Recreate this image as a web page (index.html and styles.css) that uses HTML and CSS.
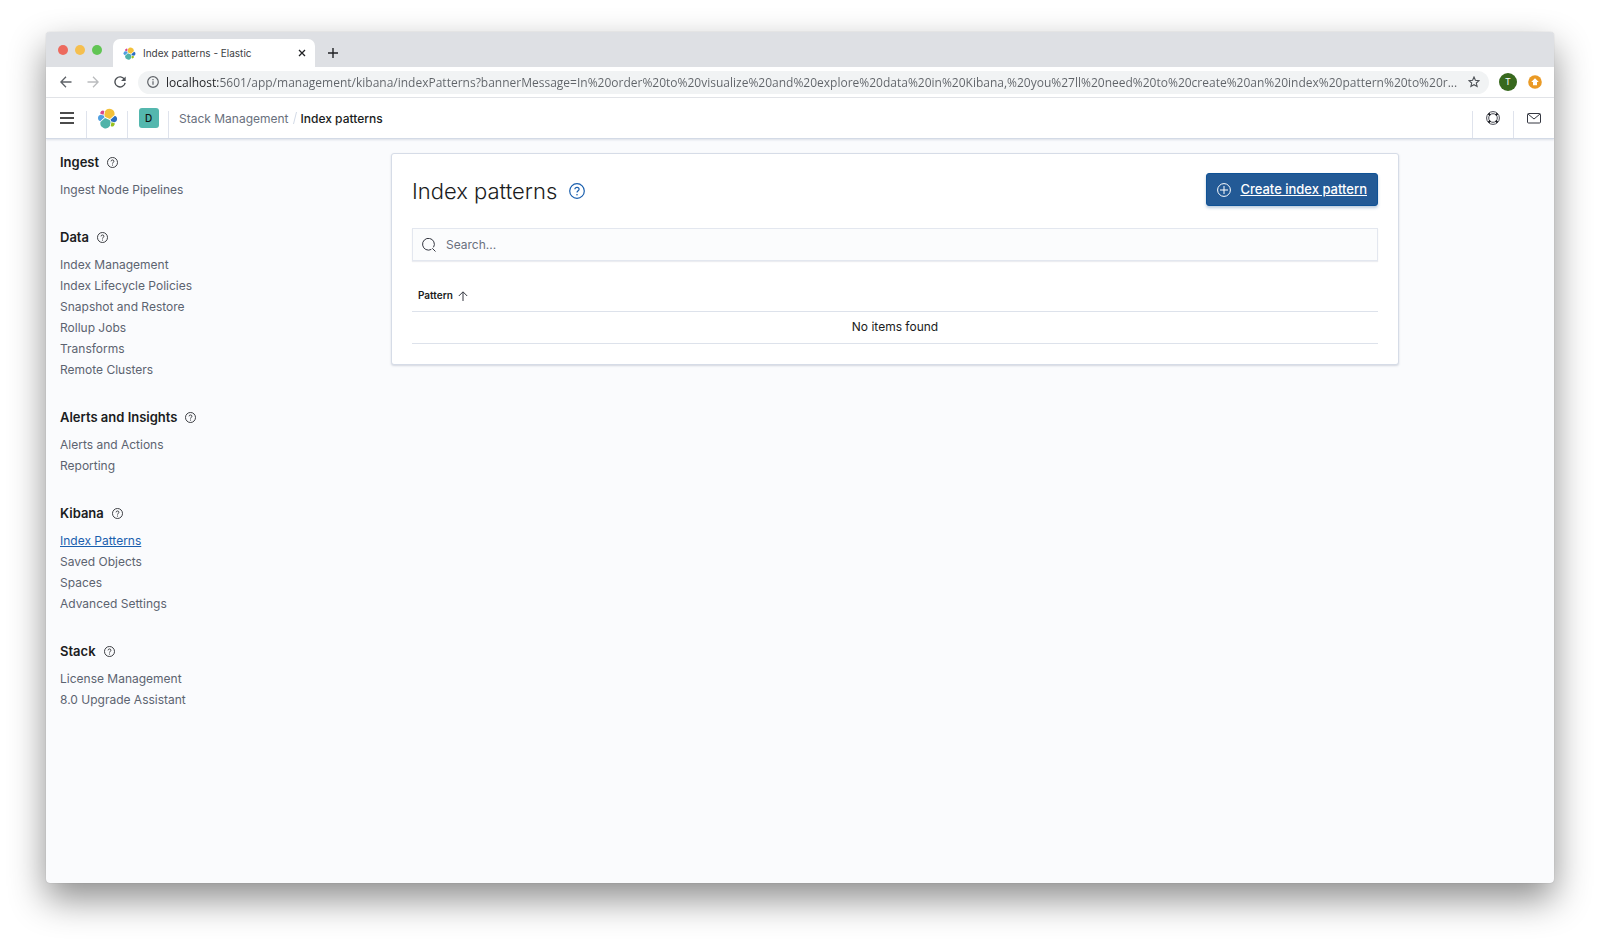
FILE: index.html
```html
<!DOCTYPE html>
<html lang="en">
<head>
<meta charset="utf-8">
<title>Index patterns - Elastic</title>
<link rel="stylesheet" href="styles.css">
</head>
<body>
<svg class="sprite" aria-hidden="true">
  <symbol id="elastic" viewBox="0 0 32 32">
    <path fill="#f3c13a" d="M12.6 13.7l7 3.2 7-6.200a7.500 7.500 0 0 0 .2-1.600 7.900 7.900 0 0 0-14.400-4.400l-1.200 6z"/>
    <path fill="#4fb3a9" d="M5.300 21.400a7.900 7.900 0 0 0 14.300 6l1.200-6-1.600-3-7-3.200z"/>
    <path fill="#d9488c" d="M5.300 9l4.800 1.200 1.100-5.500A3.800 3.800 0 0 0 5.300 9z"/>
    <path fill="#4f9fe0" d="M4.900 10.200a5.300 5.300 0 0 0-.2 9.900l6.800-6.100-1.300-2.700z"/>
    <path fill="#97c11f" d="M20.900 27.300a3.800 3.800 0 0 0 5.900-4.300l-4.800-1.200z"/>
    <path fill="#2a6dc0" d="M21.900 20.600l5.300 1.200a5.300 5.300 0 0 0 .2-9.900l-6.900 6.100z"/>
  </symbol>
  <symbol id="help" viewBox="0 0 16 16">
    <circle cx="8" cy="8" r="7.300" fill="none" stroke="currentColor" stroke-width="1.200"/>
    <path d="M5.900 6.300c0-1.200.9-2 2.100-2s2.100.8 2.100 1.900c0 1.600-2.100 1.600-2.100 3.400" fill="none" stroke="currentColor" stroke-width="1.200"/>
    <circle cx="8" cy="11.700" r=".8" fill="currentColor"/>
  </symbol>
</svg>

<div class="window">
  <div class="tabstrip">
    <div class="lights">
      <button class="light light-close" aria-label="Close window"></button>
      <button class="light light-min" aria-label="Minimize window"></button>
      <button class="light light-max" aria-label="Zoom window"></button>
    </div>
    <div class="tab">
      <svg class="favicon"><use href="#elastic"/></svg>
      <span class="tab-title">Index patterns - Elastic</span>
      <button class="plain" aria-label="Close tab"><svg width="8" height="8" viewBox="0 0 8 8"><path d="M1 1l6 6M7 1L1 7" stroke="#202124" stroke-width="1.300"/></svg></button>
    </div>
    <button class="plain new-tab" aria-label="New tab"><svg width="10" height="10" viewBox="0 0 10 10"><path d="M5 0v10M0 5h10" stroke="#202124" stroke-width="1.400"/></svg></button>
  </div>

  <div class="toolbar">
    <button class="plain nav" aria-label="Back"><svg width="12" height="12" viewBox="0 0 12 12"><path d="M11.500 6H1M6 .8L.9 6 6 11.200" fill="none" stroke="#5f6368" stroke-width="1.300"/></svg></button>
    <button class="plain nav" aria-label="Forward"><svg width="12" height="12" viewBox="0 0 12 12"><path d="M.5 6H11M6 .8L11.100 6 6 11.200" fill="none" stroke="#babcbe" stroke-width="1.300"/></svg></button>
    <button class="plain nav" aria-label="Reload"><svg width="12" height="12" viewBox="0 0 12 12"><path d="M10.500 3.400A5.100 5.100 0 1 0 11.100 6.800" fill="none" stroke="#4d5156" stroke-width="1.400"/><path d="M11.700.4v4.700H7z" fill="#4d5156"/></svg></button>
    <div class="address">
      <svg width="12" height="12" viewBox="0 0 12 12"><circle cx="6" cy="6" r="5.300" fill="none" stroke="#5f6368" stroke-width="1.200"/><path d="M6 5.200v3.600M6 3v1.300" stroke="#5f6368" stroke-width="1.200"/></svg>
      <input class="url" type="text" aria-label="Address" value="localhost:5601/app/management/kibana/indexPatterns?bannerMessage=In%20order%20to%20visualize%20and%20explore%20data%20in%20Kibana,%20you%27ll%20need%20to%20create%20an%20index%20pattern%20to%20r...">
      <button class="plain" aria-label="Bookmark"><svg width="12" height="12" viewBox="0 0 12 12"><path d="M6 1l1.400 3.300 3.600.3-2.700 2.400.8 3.500L6 8.700l-3.100 1.800.8-3.500L1 4.600l3.600-.3z" fill="none" stroke="#4d5156" stroke-width="1.100"/></svg></button>
    </div>
    <button class="profile" aria-label="Profile">T</button>
    <button class="plain update" aria-label="Update"><svg width="14" height="14" viewBox="0 0 14 14"><circle cx="7" cy="7" r="6.800" fill="#ea9a25"/><path d="M7 3.200L10.800 7H9v3.200H5V7H3.200z" fill="#fff"/></svg></button>
  </div>

  <header class="header">
    <button class="cell" aria-label="Menu"><svg width="14" height="12" viewBox="0 0 14 12"><path d="M0 1h14M0 6h14M0 11h14" stroke="#111" stroke-width="1.500"/></svg></button>
    <a class="cell" href="#" aria-label="Elastic"><svg class="logo"><use href="#elastic"/></svg></a>
    <button class="cell" aria-label="Space D"><span class="space">D</span></button>
    <nav class="crumbs" aria-label="Breadcrumb">
      <a href="#">Stack Management</a><span class="slash"><svg width="4" height="12" viewBox="0 0 4 12"><path d="M3.500 0L.5 12" stroke="#d3dae6"/></svg></span><strong>Index patterns</strong>
    </nav>
    <button class="cell cell-right" aria-label="Help"><svg width="14" height="14" viewBox="0 0 14 14"><g fill="none" stroke="#343741" stroke-width=".9"><circle cx="7" cy="7" r="6.400"/><circle cx="7" cy="7" r="4.300"/></g><path d="M2.500 2.500l1.700 1.700M11.500 2.500L9.800 4.200M2.500 11.500l1.700-1.700M11.500 11.500L9.800 9.800" stroke="#1a1c21" stroke-width="2"/></svg></button>
    <button class="cell cell-right" aria-label="News"><svg width="14" height="12" viewBox="0 0 14 12"><rect x=".5" y="1.500" width="13" height="9.500" rx="1" fill="none" stroke="#343741"/><path d="M1 2l6 5 6-5" fill="none" stroke="#343741"/></svg></button>
  </header>

  <div class="page">
    <nav class="sidebar" aria-label="Management">
      <section>
        <h2>Ingest <svg><use href="#help"/></svg></h2>
        <ul><li><a href="#">Ingest Node Pipelines</a></li></ul>
      </section>
      <section>
        <h2>Data <svg><use href="#help"/></svg></h2>
        <ul>
          <li><a href="#">Index Management</a></li>
          <li><a href="#">Index Lifecycle Policies</a></li>
          <li><a href="#">Snapshot and Restore</a></li>
          <li><a href="#">Rollup Jobs</a></li>
          <li><a href="#">Transforms</a></li>
          <li><a href="#">Remote Clusters</a></li>
        </ul>
      </section>
      <section>
        <h2>Alerts and Insights <svg><use href="#help"/></svg></h2>
        <ul>
          <li><a href="#">Alerts and Actions</a></li>
          <li><a href="#">Reporting</a></li>
        </ul>
      </section>
      <section>
        <h2>Kibana <svg><use href="#help"/></svg></h2>
        <ul>
          <li><a class="current" href="#" aria-current="page">Index Patterns</a></li>
          <li><a href="#">Saved Objects</a></li>
          <li><a href="#">Spaces</a></li>
          <li><a href="#">Advanced Settings</a></li>
        </ul>
      </section>
      <section>
        <h2>Stack <svg><use href="#help"/></svg></h2>
        <ul>
          <li><a href="#">License Management</a></li>
          <li><a href="#">8.0 Upgrade Assistant</a></li>
        </ul>
      </section>
    </nav>

    <main class="main">
      <div class="panel">
        <div class="panel-head">
          <h1>Index patterns</h1>
          <button class="plain title-help" aria-label="Help"><svg><use href="#help"/></svg></button>
          <button class="create">
            <svg width="14" height="14" viewBox="0 0 14 14"><circle cx="7" cy="7" r="6.400" fill="none" stroke="#fff"/><path d="M7 3v8M3 7h8" stroke="#fff"/></svg>
            <span>Create index pattern</span>
          </button>
        </div>
        <label class="search">
          <svg width="14" height="14" viewBox="0 0 14 14"><path d="M9.300 11.400A5.900 5.900 0 1 1 11.500 9.300M10.300 10.300L13.500 13.500" fill="none" stroke="#343741"/></svg>
          <input type="search" placeholder="Search..." aria-label="Search">
        </label>
        <table>
          <thead><tr><th scope="col"><button class="sort">Pattern <svg width="10" height="10" viewBox="0 0 10 10"><path d="M5 10V1M.8 5L5 .8 9.200 5" fill="none" stroke="#343741"/></svg></button></th></tr></thead>
          <tbody><tr><td>No items found</td></tr></tbody>
        </table>
      </div>
    </main>
  </div>
</div>
</body>
</html>
```
FILE: styles.css
```css
* { box-sizing: border-box; }

body {
  margin: 0;
  min-height: 100vh;
  padding: 32px 46px 62px;
  display: flex;
  background: #fff;
  color: #1a1c21;
  font-family: Inter, "Liberation Sans", sans-serif;
  font-size: 12px;
  line-height: 21px;
}

button, input { font: inherit; color: inherit; }
svg { display: block; flex: none; }
a { color: inherit; text-decoration: none; }
.sprite { display: none; }

.plain {
  display: grid;
  place-items: center;
  padding: 0;
  border: 0;
  background: none;
}

.window {
  flex: 1;
  min-width: 0;
  display: flex;
  flex-direction: column;
  overflow: clip;
  border-radius: 4px;
  background: #fafbfd;
  box-shadow: 0 0 1px rgba(0, 0, 0, .3), 0 16px 36px rgba(0, 0, 0, .45);
}

/* Browser chrome */
.tabstrip {
  display: flex;
  height: 35px;
  background: #dee0e4;
}

.lights {
  display: flex;
  gap: 7px;
  padding: 13px 11px 0 12px;
}

.light {
  width: 10px;
  height: 10px;
  padding: 0;
  border: 0;
  border-radius: 50%;
}
.light-close { background: #ed6a5e; }
.light-min { background: #f5bf4f; }
.light-max { background: #61c554; }

.tab {
  display: flex;
  align-items: center;
  gap: 7px;
  width: 202px;
  margin-top: 7px;
  padding: 0 9px 0 10px;
  border-radius: 7px 7px 0 0;
  background: #fff;
  color: #3c4043;
  font-size: 10px;
}
.favicon { width: 13px; height: 13px; }
.tab-title { flex: 1; }
.new-tab { margin: 7px 0 0 13px; }

.toolbar {
  display: flex;
  align-items: center;
  height: 31px;
  padding: 0 12px 0 6px;
  border-bottom: 1px solid #e3e5e8;
  background: #fff;
}
.nav { width: 27px; height: 24px; }

.address {
  flex: 1;
  display: flex;
  align-items: center;
  gap: 7px;
  height: 23px;
  margin-left: 5px;
  padding: 0 9px;
  border-radius: 12px;
  background: #f1f3f4;
}

.url {
  flex: 1;
  min-width: 0;
  height: 21px;
  padding: 0;
  border: 0;
  outline: 0;
  background: linear-gradient(to right, #202124 52px, #5f6368 52px);
  -webkit-background-clip: text;
  background-clip: text;
  color: #5f6368;
  -webkit-text-fill-color: transparent;
  font-family: "Open Sans", "Noto Sans", sans-serif;
}

.profile {
  width: 18px;
  height: 18px;
  margin: 0 11px 0 10px;
  padding: 0;
  border: 0;
  border-radius: 50%;
  background: #38691e;
  color: #fff;
  font-size: 9px;
  line-height: 18px;
}

/* Kibana header */
.header {
  z-index: 1;
  display: flex;
  height: 41px;
  border-bottom: 1px solid #d3dae6;
  background: #fff;
  box-shadow: 0 1px 2px rgba(100, 110, 140, .2);
}

.cell {
  display: grid;
  place-items: center;
  width: 41px;
  padding: 0;
  border: 0;
  background: linear-gradient(#dfe3ec, #dfe3ec) right bottom / 1px 27px no-repeat;
}
.cell-right { background-position: left bottom; }
.logo { width: 21px; height: 21px; }

.space {
  width: 20px;
  height: 20px;
  border-radius: 3px;
  background: #54b7ae;
  color: #111;
  font-size: 10px;
  font-weight: 500;
  line-height: 20px;
}

.crumbs {
  flex: 1;
  display: flex;
  align-items: center;
  padding-left: 10px;
  color: #69707d;
}
.crumbs strong { color: #1a1c21; font-weight: 500; }
.slash { margin: 0 4px; }

/* Page */
.page {
  flex: 1;
  display: flex;
  padding: 0 16px 14px 14px;
}

.sidebar {
  width: 192px;
  display: flex;
  flex-direction: column;
  gap: 27px;
  padding-top: 13px;
  color: #5c6370;
}
.sidebar h2 {
  display: flex;
  align-items: center;
  gap: 8px;
  margin: 0 0 6px;
  color: #1a1c21;
  font-size: 13px;
  font-weight: 600;
  line-height: 21px;
}
.sidebar h2 svg { width: 11px; height: 11px; }
.sidebar ul { margin: 0; padding: 0; list-style: none; }
.sidebar .current { color: #1a5fae; text-decoration: underline; }

.main { flex: 1; min-width: 0; padding-top: 14px; }

.panel {
  max-width: 1008px;
  margin: 0 auto;
  padding: 19px 20px 20px;
  border: 1px solid #d6dce7;
  border-radius: 3px;
  background: #fff;
  box-shadow: 0 1px 2px rgba(100, 110, 140, .25);
}

.panel-head {
  display: flex;
  align-items: center;
  margin-bottom: 19px;
}
h1 {
  margin: 0 12px 0 0;
  font-size: 22px;
  font-weight: 300;
  line-height: 36px;
}
.title-help { color: #1a5fae; }
.title-help svg { width: 16px; height: 16px; }

.create {
  display: flex;
  align-self: flex-start;
  align-items: center;
  gap: 9px;
  height: 33px;
  margin-left: auto;
  padding: 0 10px;
  border: 1px solid #0f5296;
  border-radius: 3px;
  background: #235a96;
  box-shadow: 0 2px 3px rgba(35, 90, 150, .3);
  color: #fff;
  font-size: 13px;
  font-weight: 500;
}
.create span { text-decoration: underline; }

.search {
  display: flex;
  align-items: center;
  gap: 10px;
  height: 33px;
  margin-bottom: 20px;
  padding: 0 9px;
  border: 1px solid #e3e7ef;
  background: #fbfcfd;
  box-shadow: 0 1px 1px rgba(100, 110, 140, .12);
}
.search input {
  flex: 1;
  padding: 0;
  border: 0;
  outline: 0;
  background: none;
}
.search input::placeholder { color: #69707d; opacity: 1; }

table { width: 100%; border-collapse: collapse; }
th, td { padding: 0 6px; border-bottom: 1px solid #dde2eb; }
th { height: 30px; text-align: left; }
td { height: 32px; padding-bottom: 2px; text-align: center; }

.sort {
  display: flex;
  align-items: center;
  gap: 5px;
  padding: 0;
  border: 0;
  background: none;
  font-size: 10px;
  font-weight: 600;
}
```
